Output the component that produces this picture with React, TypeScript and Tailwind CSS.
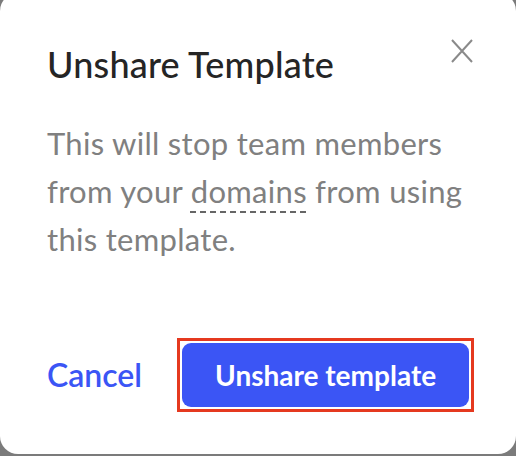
import React from "react";

const UnshareDialog: React.FC = () => {
  return (
    <div className="relative -mt-[7px] flex h-[461px] flex-col rounded-[18px] bg-white px-[47px] pt-[49px]">
      <button
        aria-label="Close"
        className="absolute right-[43px] top-[46px] text-[#8a8a8a]"
      >
        <svg width="22" height="24" viewBox="0 0 22 24" fill="none">
          <path
            d="M1 1 L21 23 M21 1 L1 23"
            stroke="currentColor"
            strokeWidth="2"
          />
        </svg>
      </button>
      <h2 className="text-[36px] leading-[44px] font-medium tracking-[0.2px] text-[#252525]">
        Unshare Template
      </h2>
      <p className="mt-[33px] w-[440px] text-[31px] leading-[48px] tracking-[0.3px] text-[#808080]">
        This will stop team members from your{" "}
        <span className="underline decoration-dashed decoration-[#666] decoration-2 underline-offset-[8px]">
          domains
        </span>{" "}
        from using this template.
      </p>
      <div className="mt-[75px] flex items-center gap-[35px]">
        <button className="text-[32px] font-semibold text-[#3b55f5]">
          Cancel
        </button>
        <div className="border-[3px] border-[#e5391f] p-[2px]">
          <button className="h-[64px] w-[287px] rounded-[9px] bg-[#3b55f5] text-[28px] font-bold text-white">
            Unshare template
          </button>
        </div>
      </div>
    </div>
  );
};

export default function App() {
  return (
    <div
      className="h-[456px] w-[516px] overflow-hidden bg-[#7b7b7b]"
      style={{ fontFamily: "Lato, 'Noto Sans', sans-serif" }}
    >
      <UnshareDialog />
    </div>
  );
}
